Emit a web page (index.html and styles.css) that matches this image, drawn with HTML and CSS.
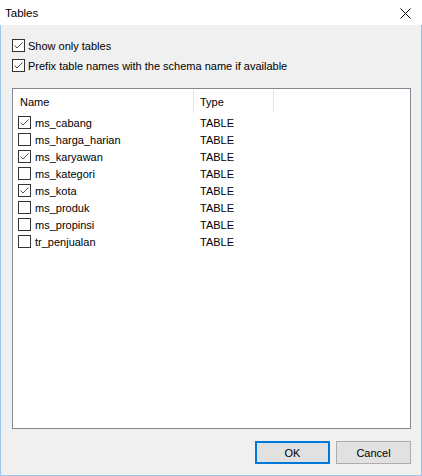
FILE: index.html
```html
<!DOCTYPE html>
<html>
<head>
<meta charset="utf-8">
<link rel="stylesheet" href="styles.css">
</head>
<body>
<div class="window">
  <div class="titlebar">
    <span class="title">Tables</span>
    <svg class="close" width="11" height="11" viewBox="0 0 11 11"><path d="M0.5 0.5 L10.5 10.5 M10.5 0.5 L0.5 10.5" stroke="#000" stroke-width="1" fill="none"/></svg>
  </div>
  <div class="content">
    <div class="options">
      <label class="opt"><span class="cb checked"><svg width="11" height="11" viewBox="0 0 11 11"><path d="M1.5 5.5 L4 8 L9.5 2.5" stroke="#4a4a4a" stroke-width="1" fill="none"/></svg></span>Show only tables</label>
      <label class="opt"><span class="cb checked"><svg width="11" height="11" viewBox="0 0 11 11"><path d="M1.5 5.5 L4 8 L9.5 2.5" stroke="#4a4a4a" stroke-width="1" fill="none"/></svg></span>Prefix table names with the schema name if available</label>
    </div>
    <div class="list">
      <div class="header">
        <div class="hcol name">Name</div>
        <div class="hcol type">Type</div>
        <div class="hcol rest"></div>
      </div>
      <div class="rows">
        <div class="row"><div class="cname"><span class="cb small checked"><svg width="11" height="11" viewBox="0 0 11 11"><path d="M1.5 5.5 L4 8 L9.5 2.5" stroke="#555" stroke-width="1" fill="none"/></svg></span>ms_cabang</div><div class="ctype">TABLE</div></div>
        <div class="row"><div class="cname"><span class="cb small"></span>ms_harga_harian</div><div class="ctype">TABLE</div></div>
        <div class="row"><div class="cname"><span class="cb small checked"><svg width="11" height="11" viewBox="0 0 11 11"><path d="M1.5 5.5 L4 8 L9.5 2.5" stroke="#555" stroke-width="1" fill="none"/></svg></span>ms_karyawan</div><div class="ctype">TABLE</div></div>
        <div class="row"><div class="cname"><span class="cb small"></span>ms_kategori</div><div class="ctype">TABLE</div></div>
        <div class="row"><div class="cname"><span class="cb small checked"><svg width="11" height="11" viewBox="0 0 11 11"><path d="M1.5 5.5 L4 8 L9.5 2.5" stroke="#555" stroke-width="1" fill="none"/></svg></span>ms_kota</div><div class="ctype">TABLE</div></div>
        <div class="row"><div class="cname"><span class="cb small"></span>ms_produk</div><div class="ctype">TABLE</div></div>
        <div class="row"><div class="cname"><span class="cb small"></span>ms_propinsi</div><div class="ctype">TABLE</div></div>
        <div class="row"><div class="cname"><span class="cb small"></span>tr_penjualan</div><div class="ctype">TABLE</div></div>
      </div>
    </div>
    <div class="buttons">
      <button class="btn default">OK</button>
      <button class="btn">Cancel</button>
    </div>
  </div>
</div>
</body>
</html>
```

FILE: styles.css
```css
* { box-sizing: border-box; }
html, body { margin: 0; padding: 0; }
body {
  font-family: "Liberation Sans", Arial, sans-serif;
  font-size: 11px;
  color: #000;
  background: #f0f0f0;
}
.window {
  width: 422px;
  height: 476px;
  display: flex;
  flex-direction: column;
}
.titlebar {
  height: 25px;
  background: #fff;
  display: flex;
  align-items: center;
  justify-content: space-between;
  padding: 0 11px 0 5px;
}
.title {
  font-size: 11.5px;
  color: #000;
}
.close { display: block; margin-top: 1px; }
.content {
  flex: 1;
  background: #f0f0f0;
  border: 1px solid #9fc6e7;
  border-top: none;
  display: flex;
  flex-direction: column;
  padding: 14px 10px 11px 11px;
}
.options {
  display: flex;
  flex-direction: column;
  gap: 7px;
  margin-bottom: 16px;
}
.opt {
  display: flex;
  align-items: center;
  height: 13px;
  gap: 3px;
  font-size: 11px;
  white-space: nowrap;
}
.cb {
  width: 13px;
  height: 13px;
  border: 1px solid #333;
  background: #fff;
  flex: none;
  display: flex;
  align-items: center;
  justify-content: center;
}
.cb svg { display: block; }
.list {
  flex: 1;
  background: #fff;
  border: 1px solid #828790;
  display: flex;
  flex-direction: column;
}
.header {
  height: 25px;
  display: flex;
  align-items: stretch;
  padding-top: 1px;
}
.hcol {
  display: flex;
  align-items: center;
  border-right: 1px solid #e5e5e5;
  height: 23px;
}
.hcol.name { width: 181px; padding-left: 7px; }
.hcol.type { width: 80px; padding-left: 6px; }
.hcol.rest { border-right: none; }
.rows { display: flex; flex-direction: column; }
.row {
  height: 17px;
  display: flex;
  align-items: center;
}
.cname {
  width: 181px;
  display: flex;
  align-items: center;
  gap: 4px;
  padding-left: 5px;
}
.ctype { padding-left: 6px; }
.buttons {
  display: flex;
  justify-content: flex-end;
  gap: 6px;
  margin-top: 12px;
}
.btn {
  width: 75px;
  height: 23px;
  background: #e1e1e1;
  border: 1px solid #adadad;
  font-family: "Liberation Sans", Arial, sans-serif;
  font-size: 11px;
  color: #000;
  padding: 0;
  margin: 0;
}
.btn.default {
  border: 2px solid #0078d7;
}
```
